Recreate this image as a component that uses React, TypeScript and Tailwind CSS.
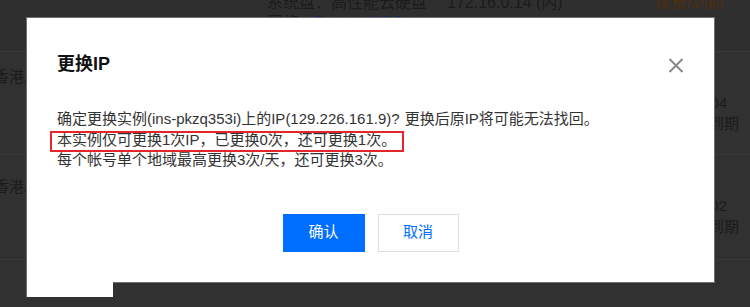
import React from "react";

const font = { fontFamily: '"Liberation Sans", "Noto Sans CJK SC", Arial, sans-serif' };

function CloseIcon() {
  return (
    <svg width="16" height="15" viewBox="0 0 16 15" fill="none">
      <path d="M1.5 1 L14.5 14 M14.5 1 L1.5 14" stroke="#888" strokeWidth="2" />
    </svg>
  );
}

export default function App() {
  return (
    <div
      className="relative w-[750px] h-[307px] overflow-hidden bg-[#313131] text-[15px] text-[#1b1b1b]"
      style={font}
    >
      {/* dimmed page behind the dialog */}
      <div className="flex flex-col">
        <div className="h-[52px] flex border-b border-[#3a3a3a] bg-[#2f2f2f]">
          <div className="w-[267px]" />
          <div className="w-[180px] -mt-[7px] leading-[20px] text-[16px]">
            <div>系统盘：高性能云硬盘</div>
            <div>
              网络：<span className="text-[#0b2a55]">Default-VPC</span>
            </div>
          </div>
          <div className="w-[208px] -mt-[7px] leading-[20px] text-[16px]">172.16.0.14 (内)</div>
          <div className="-mt-[7px] leading-[20px] text-[16px] text-[#4f2d10]">续费/到期</div>
        </div>
        <div className="h-[103px] flex justify-between border-b border-[#3a3a3a]">
          <div className="-ml-[6px] mt-[14px]">香港二区</div>
          <div className="mt-[40px] flex flex-col items-end leading-[21px]">
            <div className="mr-[23px]">2021-03-04</div>
            <div className="mr-[11px]">15天后到期</div>
          </div>
        </div>
        <div className="h-[105px] flex justify-between border-b border-[#3a3a3a]">
          <div className="-ml-[6px] mt-[21px]">香港二区</div>
          <div className="mt-[40px] flex flex-col items-end leading-[21px]">
            <div className="mr-[23px]">2021-03-02</div>
            <div className="mr-[11px]">13天后到期</div>
          </div>
        </div>
      </div>

      {/* dialog */}
      <div className="absolute left-[26px] top-[17px] w-[689px] h-[266px] bg-white border border-[#6e6e6e] pt-[33px] px-[30px] flex flex-col">
        <div className="flex items-center justify-between h-[26px]">
          <div className="text-[18px] font-bold leading-[26px] text-[#111]">更换IP</div>
          <div className="mt-[3px]">
            <CloseIcon />
          </div>
        </div>

        <div className="mt-[32px] text-[15px] leading-[20.5px] text-[#333]">
          <div>
            确定更换实例(ins-pkzq353i)上的IP(129.226.161.9)?
            <span className="ml-[5px]">更换后原IP将可能无法找回。</span>
          </div>
          <div>
            <span className="relative inline-block">
              本实例仅可更换1次IP，已更换0次，还可更换1次。
              <span className="absolute -left-[7px] -right-[8px] top-[1px] -bottom-[2px] border-2 border-[#e3262b]" />
            </span>
          </div>
          <div>每个帐号单个地域最高更换3次/天，还可更换3次。</div>
        </div>

        <div className="mt-[43px] flex justify-center gap-[13px]">
          <button className="w-[82px] h-[38px] bg-[#006eff] text-white text-[15px]">确认</button>
          <button className="w-[81px] h-[38px] bg-white border border-[#dcdfe6] text-[#006eff] text-[15px]">
            取消
          </button>
        </div>
      </div>
      <div className="absolute left-[26px] top-[282px] w-[87px] h-[15px] bg-white border-l border-[#6e6e6e]" />
    </div>
  );
}
